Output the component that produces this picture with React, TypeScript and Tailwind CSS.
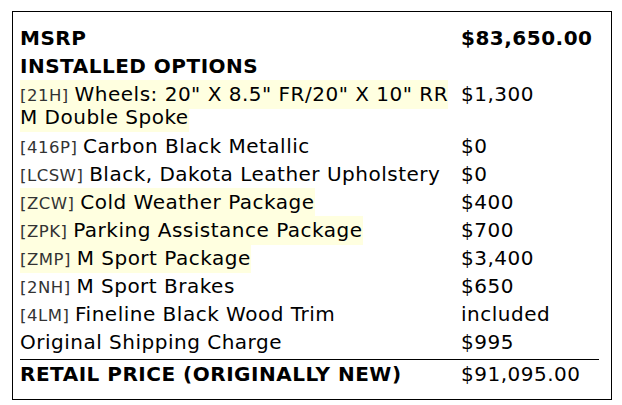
import React from 'react';

type Option = {
  code?: string;
  label: React.ReactNode;
  price: string;
  highlight?: boolean;
};

const options: Option[] = [
  {
    code: '21H',
    label: (
      <>
        Wheels: 20" X 8.5" FR/20" X 10" RR
        <br />
        M Double Spoke
      </>
    ),
    price: '$1,300',
    highlight: true,
  },
  { code: '416P', label: 'Carbon Black Metallic', price: '$0' },
  { code: 'LCSW', label: 'Black, Dakota Leather Upholstery', price: '$0' },
  { code: 'ZCW', label: 'Cold Weather Package', price: '$400', highlight: true },
  { code: 'ZPK', label: 'Parking Assistance Package', price: '$700', highlight: true },
  { code: 'ZMP', label: 'M Sport Package', price: '$3,400', highlight: true },
  { code: '2NH', label: 'M Sport Brakes', price: '$650' },
  { code: '4LM', label: 'Fineline Black Wood Trim', price: 'included' },
  { label: 'Original Shipping Charge', price: '$995' },
];

const App: React.FC = () => {
  return (
    <div className="bg-white w-[622px] h-[405px] pt-[11px] pl-[12px] font-['DejaVu_Sans',sans-serif] text-black text-[20px] leading-[21px] tracking-[0.5px]">
      <div className="w-[600px] h-[389px] border border-black pt-[12px] pl-[7px] pr-[12px]">
        {/* Header rows */}
        <div className="grid grid-cols-[441px_1fr] font-bold">
          <div className="py-[3.5px]">MSRP</div>
          <div className="py-[3.5px]">$83,650.00</div>
          <div className="py-[3.5px] col-span-2">INSTALLED OPTIONS</div>
        </div>

        {/* Option rows */}
        <div className="grid grid-cols-[441px_1fr]">
          {options.map((o, i) => (
            <React.Fragment key={i}>
              <div className={i === 0 ? 'pt-[2.5px] pb-[4px] leading-[23px]' : 'py-[3.5px]'}>
                <span className={o.highlight ? 'bg-[#ffffe0] pt-[1.7px] pb-[3px]' : ''}>
                  {o.code && <span className="text-[16.5px] leading-[14px] text-[#333]">[{o.code}] </span>}
                  {o.label}
                </span>
              </div>
              <div className="py-[3.5px]">{o.price}</div>
            </React.Fragment>
          ))}
        </div>

        {/* Total */}
        <div className="mt-[2px] border-t border-black grid grid-cols-[441px_1fr] pt-[4.5px]">
          <div className="font-bold">RETAIL PRICE (ORIGINALLY NEW)</div>
          <div>$91,095.00</div>
        </div>
      </div>
    </div>
  );
};

export default App;
